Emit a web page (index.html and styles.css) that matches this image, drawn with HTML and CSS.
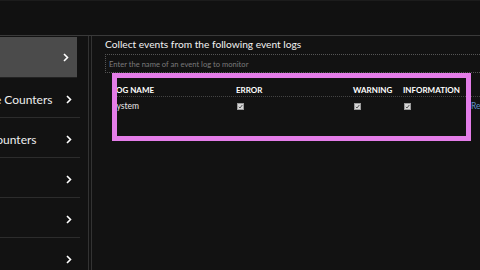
FILE: index.html
```html
<!DOCTYPE html>
<html lang="en">
<head>
    <meta charset="UTF-8">
    <title>Diagnostics - Event Logs</title>
    <link rel="stylesheet" href="styles.css">
</head>
<body>

    <div class="topbar"></div>

    <div class="main">
        <!-- Menu lateral -->
        <nav class="sidebar">
            <div class="nav-item selected">
                <span class="nav-label">Event Logs</span>
                <svg class="chevron" width="6" height="9" viewBox="0 0 6 9"><polyline points="1,1 4.5,4.5 1,8" fill="none" stroke="#fff" stroke-width="1.6"/></svg>
            </div>
            <div class="nav-item">
                <span class="nav-label">Performance Counters</span>
                <svg class="chevron" width="6" height="9" viewBox="0 0 6 9"><polyline points="1,1 4.5,4.5 1,8" fill="none" stroke="#fff" stroke-width="1.6"/></svg>
            </div>
            <div class="nav-item">
                <span class="nav-label">Processor Counters</span>
                <svg class="chevron" width="6" height="9" viewBox="0 0 6 9"><polyline points="1,1 4.5,4.5 1,8" fill="none" stroke="#fff" stroke-width="1.6"/></svg>
            </div>
            <div class="nav-item">
                <span class="nav-label"></span>
                <svg class="chevron" width="6" height="9" viewBox="0 0 6 9"><polyline points="1,1 4.5,4.5 1,8" fill="none" stroke="#fff" stroke-width="1.6"/></svg>
            </div>
            <div class="nav-item">
                <span class="nav-label"></span>
                <svg class="chevron" width="6" height="9" viewBox="0 0 6 9"><polyline points="1,1 4.5,4.5 1,8" fill="none" stroke="#fff" stroke-width="1.6"/></svg>
            </div>
            <div class="nav-item">
                <span class="nav-label"></span>
                <svg class="chevron" width="6" height="9" viewBox="0 0 6 9"><polyline points="1,1 4.5,4.5 1,8" fill="none" stroke="#fff" stroke-width="1.6"/></svg>
            </div>
        </nav>

        <!-- Conteudo -->
        <section class="content">
            <h2 class="title">Collect events from the following event logs</h2>
            <input type="text" class="log-input" placeholder="Enter the name of an event log to monitor">

            <div class="logs">
                <div class="logs-row logs-head">
                    <span>LOG NAME</span>
                    <span>ERROR</span>
                    <span>WARNING</span>
                    <span>INFORMATION</span>
                    <span></span>
                </div>
                <div class="logs-row">
                    <span>System</span>
                    <span><svg class="check" width="7" height="7" viewBox="0 0 7 7"><rect x="0.5" y="0.5" width="6" height="6" fill="#d6d6d6" stroke="#9a9a9a"/><polyline points="1.8,3.8 3,5 5.3,2" fill="none" stroke="#555" stroke-width="1"/></svg></span>
                    <span><svg class="check" width="7" height="7" viewBox="0 0 7 7"><rect x="0.5" y="0.5" width="6" height="6" fill="#d6d6d6" stroke="#9a9a9a"/><polyline points="1.8,3.8 3,5 5.3,2" fill="none" stroke="#555" stroke-width="1"/></svg></span>
                    <span><svg class="check" width="7" height="7" viewBox="0 0 7 7"><rect x="0.5" y="0.5" width="6" height="6" fill="#d6d6d6" stroke="#9a9a9a"/><polyline points="1.8,3.8 3,5 5.3,2" fill="none" stroke="#555" stroke-width="1"/></svg></span>
                    <a class="remove" href="#">Remove</a>
                </div>
                <div class="highlight"></div>
            </div>
        </section>
    </div>

</body>
</html>
```
FILE: styles.css
```css
/* CSS */
body {
    margin: 0;
    background-color: #121212;
    color: #e8e8e8;
    font-family: Lato, "Open Sans", Arial, sans-serif;
    overflow: hidden;
    height: 270px;
}

.topbar {
    height: 36px;
    background-color: #111;
    border-top: 1px solid #1c1c1c;
    box-sizing: border-box;
    border-bottom: 1px solid #3a3a3a;
}

.main {
    display: flex;
    height: 234px;
}

/* Menu lateral */
.sidebar {
    width: 88px;
    flex-shrink: 0;
    border-right: 4px double #333;
    overflow: hidden;
    padding-top: 1px;
}

.nav-item {
    width: 80px;
    height: 36px;
    padding-top: 3px;
    border-bottom: 1px solid #2c2c2c;
    display: flex;
    align-items: center;
}

.nav-item.selected {
    width: 77px;
    height: 40px;
    padding-top: 0;
    background-color: #4b4b4b;
    border-bottom: 1px solid #222;
}

.nav-label {
    flex: 1;
    margin-left: -66px;
    font-size: 12px;
    white-space: nowrap;
    overflow: hidden;
    color: #eee;
}

.chevron {
    flex-shrink: 0;
    margin: 0 8px 0 4px;
}

/* Conteudo */
.content {
    flex: 1;
    padding-left: 13px;
    min-width: 0;
}

.title {
    margin: 0;
    font-size: 10.2px;
    font-weight: normal;
    line-height: 16px;
    height: 17px;
    color: #f2f2f2;
}

.log-input {
    display: block;
    width: 100%;
    box-sizing: border-box;
    height: 19px;
    margin-top: 1px;
    background: transparent;
    border: 1px dotted #555;
    border-right: none;
    padding: 0 3px;
    font-family: inherit;
    font-size: 7.6px;
    color: #ccc;
}

.log-input::placeholder {
    color: #7a7a7a;
}

.logs {
    position: relative;
    margin: 4px 0 0 7px;
    width: 400px;
}

.logs-row {
    display: grid;
    grid-template-columns: 124px 117px 50px 68px 40px;
    align-items: center;
    box-sizing: border-box;
    height: 18px;
    font-size: 8.5px;
    white-space: nowrap;
}

.logs-head {
    height: 20px;
    font-weight: bold;
    font-size: 8px;
    padding-top: 6px;
    border-bottom: 1px dotted #444;
    color: #fff;
}

.check {
    display: block;
    margin-left: 1px;
}

.remove {
    color: #5f93c9;
    text-decoration: none;
    font-size: 8.5px;
}

/* Caixa de destaque */
.highlight {
    position: absolute;
    left: 0;
    top: -4px;
    width: 349px;
    height: 58px;
    border: 5px solid #e47de8;
}
```
